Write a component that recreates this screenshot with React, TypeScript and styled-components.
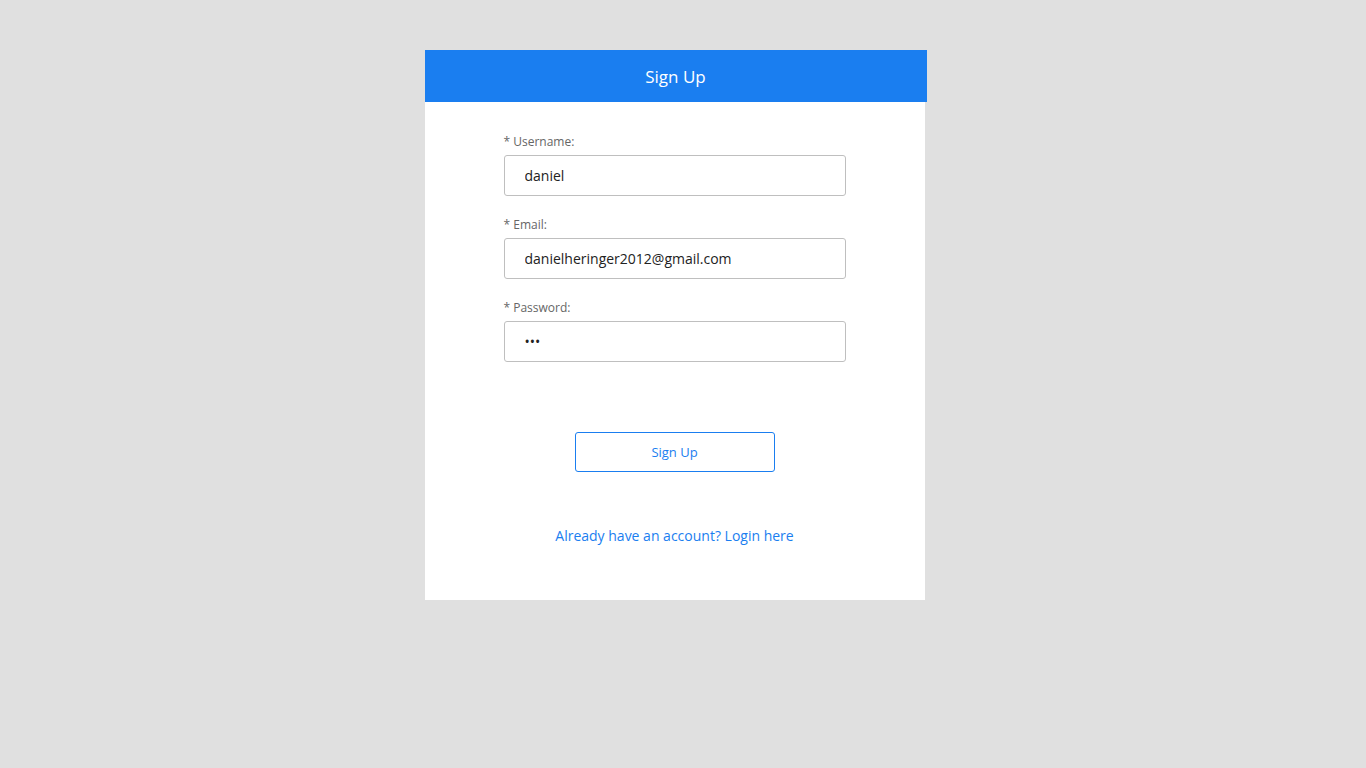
import styled, { createGlobalStyle } from "styled-components";

const GlobalStyle = createGlobalStyle`
   html, body {
      margin: 0;
      padding: 0;
      background-color: #e0e0e0;
      font-family: "Open Sans", "Noto Sans", sans-serif;
   }
   * {
      box-sizing: border-box;
   }
`;

interface Field {
   label: string;
   type: string;
   value: string;
}

const fields: Field[] = [
   { label: "Username:", type: "text", value: "daniel" },
   { label: "Email:", type: "email", value: "danielheringer2012@gmail.com" },
   { label: "Password:", type: "password", value: "abc" },
];

const App = () => {
   return (
      <>
         <GlobalStyle />
         <Page>
            <Card>
               <Header>Sign Up</Header>
               <Form onSubmit={(e) => e.preventDefault()}>
                  {fields.map((field) => (
                     <FieldGroup key={field.label}>
                        <Label>* {field.label}</Label>
                        <Input type={field.type} defaultValue={field.value} />
                     </FieldGroup>
                  ))}
                  <SubmitButton type="submit">Sign Up</SubmitButton>
                  <LoginLink href="#">Already have an account? Login here</LoginLink>
               </Form>
            </Card>
         </Page>
      </>
   );
};

// the reference keeps a 17px scrollbar at the right, so centre in the remaining width
const Page = styled.div`
   display: flex;
   justify-content: center;
   padding: 50px 17px 269px 0;
   min-height: 100vh;
`;

const Card = styled.div`
   width: 500px;
   background-color: #fff;
   display: flex;
   flex-direction: column;
   align-self: flex-start;
`;

const Header = styled.div`
   width: 502px;
   height: 52px;
   background-color: #1a7ef0;
   color: #fff;
   font-size: 17px;
   display: flex;
   align-items: center;
   justify-content: center;
`;

const Form = styled.form`
   width: 342px;
   margin: 0 auto;
   padding: 31px 0 54px;
   display: flex;
   flex-direction: column;
`;

const FieldGroup = styled.div`
   display: flex;
   flex-direction: column;
   margin-bottom: 20px;
   &:nth-of-type(3) {
      margin-bottom: 70px;
   }
`;

const Label = styled.label`
   font-size: 12px;
   line-height: 17px;
   color: #666;
   margin-bottom: 5px;
`;

const Input = styled.input`
   height: 41px;
   width: 100%;
   border: 1px solid #bfbfbf;
   border-radius: 3px;
   padding: 0 20px;
   font-family: "Open Sans", "Noto Sans", sans-serif;
   font-size: 14px;
   color: #222;
   outline: none;
`;

const SubmitButton = styled.button`
   align-self: center;
   width: 200px;
   height: 40px;
   background: #fff;
   border: 1px solid #1a7ef0;
   border-radius: 3px;
   color: #1a7ef0;
   font-family: "Open Sans", "Noto Sans", sans-serif;
   font-size: 13px;
   cursor: pointer;
   margin-bottom: 54px;
`;

const LoginLink = styled.a`
   align-self: center;
   font-size: 14px;
   line-height: 20px;
   color: #1a7ef0;
   text-decoration: none;
`;

export default App;
